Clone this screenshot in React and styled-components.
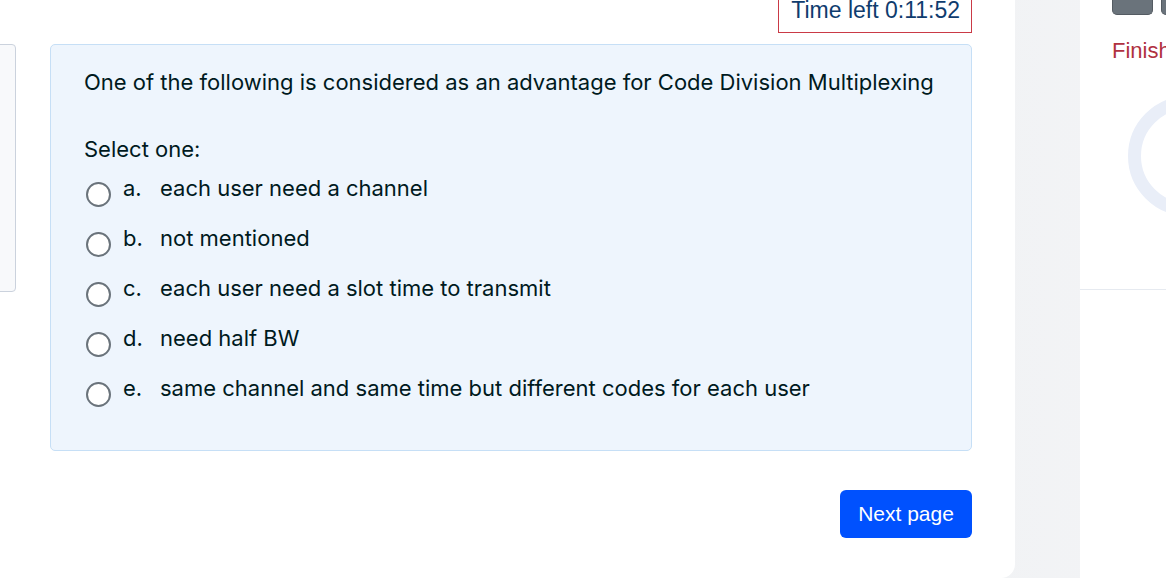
import styled, { createGlobalStyle } from "styled-components";

const GlobalStyle = createGlobalStyle`
    html, body {
        margin: 0;
        padding: 0;
        height: 578px;
        overflow: hidden;
        background: #ffffff;
    }
    * { box-sizing: border-box; }
`;

const Page = styled.div`
    display: flex;
    height: 578px;
    background: linear-gradient(90deg, #e9ecee 0%, #eef0f2 60%, #f3f4f6 100%);
`;

const Main = styled.main`
    width: 1015px;
    flex-shrink: 0;
    display: flex;
    gap: 34px;
    background: #ffffff;
    border-bottom-right-radius: 14px;
`;

const SidePanel = styled.aside`
    width: 17px;
    height: 248px;
    margin-top: 44px;
    margin-left: -1px;
    background: #f8f9fb;
    border: 1px solid #cbd2dd;
    border-radius: 0 4px 4px 0;
`;

const Column = styled.section`
    width: 922px;
    display: flex;
    flex-direction: column;
    align-items: flex-end;
`;

const Timer = styled.div`
    height: 33px;
    padding: 0 11px 0 12px;
    border: 1px solid #ca3a46;
    border-top: none;
    color: #0f3c6e;
    font-family: "Liberation Sans", Arial, sans-serif;
    font-size: 23px;
    line-height: 21px;
    white-space: nowrap;
`;

const Card = styled.div`
    align-self: stretch;
    margin-top: 11px;
    height: 407px;
    padding: 22px 33px 0;
    background: #eef5fd;
    border: 1px solid #c6dff6;
    border-radius: 5px;
    color: #001a1e;
    font-family: Inter, "Noto Sans", sans-serif;
    font-size: 22px;
`;

const Prompt = styled.p`
    margin: 0;
    line-height: 30px;
`;

const SelectLabel = styled.p`
    margin: 37px 0 0;
    line-height: 30px;
`;

const Options = styled.div`
    display: flex;
    flex-direction: column;
    gap: 20px;
    margin-top: 9px;
`;

const Option = styled.label`
    display: flex;
    align-items: center;
    height: 30px;
    cursor: pointer;
`;

const Radio = styled.span`
    width: 25px;
    height: 25px;
    margin: 12px 12px 0 2px;
    border: 2px solid #6a737b;
    border-radius: 50%;
    background: #ffffff;
    flex-shrink: 0;
`;

const Letter = styled.span`
    width: 37px;
`;

const NextButton = styled.button`
    margin-top: 39px;
    width: 132px;
    height: 48px;
    border: none;
    border-radius: 6px;
    background: #0051fe;
    color: #ffffff;
    font-family: "Liberation Sans", Arial, sans-serif;
    font-size: 21px;
    cursor: pointer;
`;

const Drawer = styled.aside`
    margin-left: auto;
    width: 86px;
    flex-shrink: 0;
    background: #ffffff;
    overflow: hidden;
    display: flex;
    flex-direction: column;
`;

const NavButtons = styled.div`
    display: flex;
    gap: 8px;
    padding-left: 32px;
`;

const NavSquare = styled.span`
    width: 41px;
    height: 15px;
    flex-shrink: 0;
    background: #6a737b;
    border: 1px solid #545b62;
    border-top: none;
    border-radius: 0 0 5px 5px;
`;

const FinishLink = styled.a`
    display: block;
    margin: 26px 0 0 32px;
    white-space: nowrap;
    color: #b0313f;
    font-family: "Liberation Sans", Arial, sans-serif;
    font-size: 22px;
    line-height: 20px;
`;

const Spinner = styled.div`
    width: 120px;
    height: 120px;
    margin: 35px 0 0 48px;
    flex-shrink: 0;
    border: 13px solid #e9eef8;
    border-radius: 50%;
`;

const Divider = styled.hr`
    margin: 73px 0 0;
    border: none;
    border-top: 1px solid #e6eaf0;
    width: 100%;
`;

const answers = [
    ["a.", "each user need a channel"],
    ["b.", "not mentioned"],
    ["c.", "each user need a slot time to transmit"],
    ["d.", "need half BW"],
    ["e.", "same channel and same time but different codes for each user"],
];

const App = () => {
    return <>
        <GlobalStyle />
        <Page>
            <Main>
                <SidePanel />
                <Column>
                    <Timer>Time left 0:11:52</Timer>
                    <Card>
                        <Prompt>One of the following is considered as an advantage for Code Division Multiplexing</Prompt>
                        <SelectLabel>Select one:</SelectLabel>
                        <Options>
                            {answers.map(([letter, text]) =>
                                <Option key={letter}>
                                    <Radio />
                                    <Letter>{letter}</Letter>
                                    <span>{text}</span>
                                </Option>
                            )}
                        </Options>
                    </Card>
                    <NextButton>Next page</NextButton>
                </Column>
            </Main>
            <Drawer>
                <NavButtons>
                    <NavSquare />
                    <NavSquare />
                </NavButtons>
                <FinishLink>Finish attempt ...</FinishLink>
                <Spinner />
                <Divider />
            </Drawer>
        </Page>
    </>
}

export default App
